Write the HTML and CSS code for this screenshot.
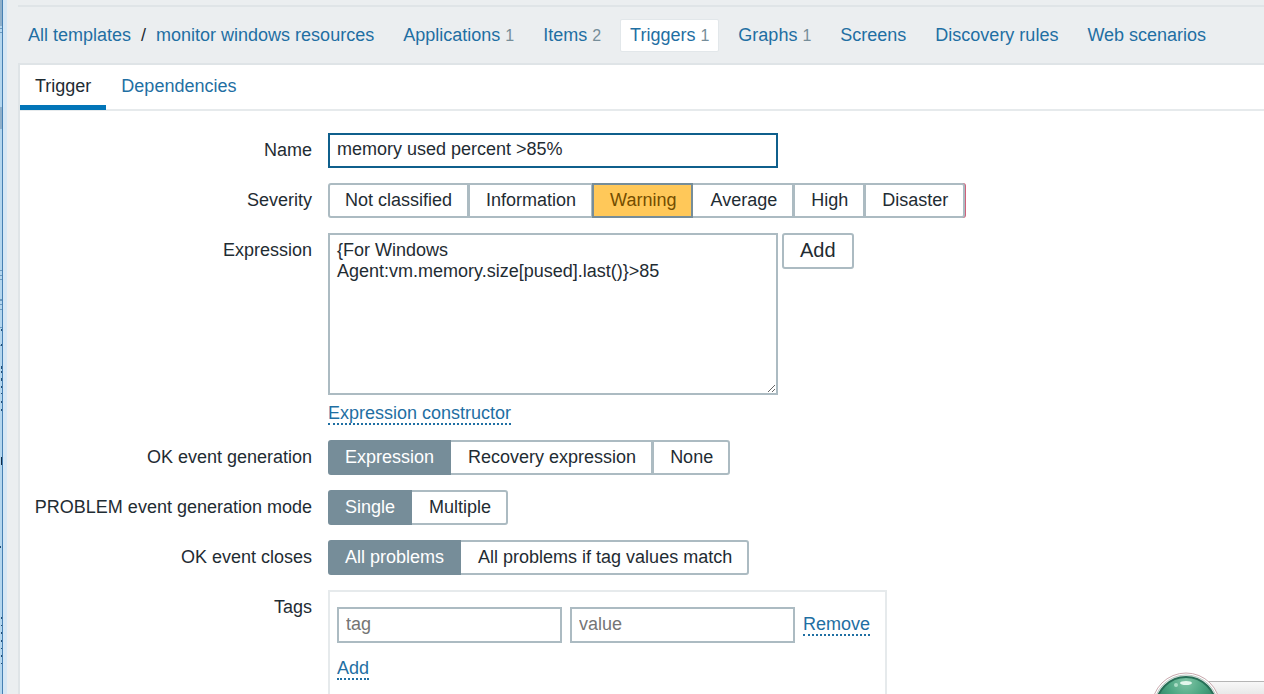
FILE: index.html
```html
<!DOCTYPE html>
<html lang="en">
<head>
<meta charset="utf-8">
<title>Trigger configuration</title>
<link rel="stylesheet" href="styles.css">
</head>
<body>
<div class="window">
  <div class="edge" aria-hidden="true">
    <svg class="edge-marks" width="3" height="694" viewBox="0 0 3 694">
      <path fill="#8fb0cb" d="M0 0h2v26H0zM0 107h2v22H0z"/>
      <path fill="#6d9abf" d="M0 28h2v1H0zM0 32h2v1H0zM0 270h2v1H0zM0 275h2v1H0zM0 279h2v1H0zM0 299h2v2H0zM0 304h2v1H0zM0 309h2v1H0zM0 327h2v1H0zM0 345h2v1H0z"/>
      <path fill="#234f77" d="M1 329h1v2H1zM1 344h1v2H1zM1 366h1v3H1zM1 371h1v2H1zM1 378h1v3H1zM1 386h1v2H1zM1 393h1v1H1zM1 401h1v2H1zM1 409h1v2H1zM0 546h1v2H0zM1 617h1v2H1zM1 625h1v1H1zM1 632h1v2H1zM1 640h1v2H1zM1 648h1v1H1zM1 655h1v2H1zM1 663h1v1H1z"/>
      <path fill="#102c48" d="M1 457h1v8H1z"/>
    </svg>
  </div>
  <div class="page">
    <nav class="nav">
      <a href="#">All templates</a><span class="slash">/</span><a href="#">monitor windows resources</a>
      <ul class="nav-list">
        <li><a href="#">Applications</a> <sup>1</sup></li>
        <li><a href="#">Items</a> <sup>2</sup></li>
        <li class="selected"><a href="#">Triggers</a> <sup>1</sup></li>
        <li><a href="#">Graphs</a> <sup>1</sup></li>
        <li><a href="#">Screens</a></li>
        <li><a href="#">Discovery rules</a></li>
        <li><a href="#">Web scenarios</a></li>
      </ul>
    </nav>
    <main class="panel">
      <div class="tabs">
        <a class="tab active" href="#">Trigger</a>
        <a class="tab" href="#">Dependencies</a>
      </div>
      <form class="form">
        <label class="label" for="name">Name</label>
        <input class="text wide focused" id="name" type="text" value="memory used percent &gt;85%">

        <span class="label" id="severity-label">Severity</span>
        <div class="segments" role="radiogroup" aria-labelledby="severity-label">
          <label><input type="radio" name="severity">Not classified</label>
          <label><input type="radio" name="severity">Information</label>
          <label class="warning"><input type="radio" name="severity" checked>Warning</label>
          <label><input type="radio" name="severity">Average</label>
          <label><input type="radio" name="severity">High</label>
          <label class="marked"><input type="radio" name="severity">Disaster</label>
        </div>

        <label class="label" for="expression">Expression</label>
        <div class="expression">
          <div class="expression-row">
            <textarea class="text wide" id="expression">{For Windows Agent:vm.memory.size[pused].last()}&gt;85</textarea>
            <button class="button" type="button">Add</button>
          </div>
          <button class="link" type="button">Expression constructor</button>
        </div>

        <span class="label" id="ok-label">OK event generation</span>
        <div class="segments" role="radiogroup" aria-labelledby="ok-label">
          <label><input type="radio" name="ok" checked>Expression</label>
          <label><input type="radio" name="ok">Recovery expression</label>
          <label><input type="radio" name="ok">None</label>
        </div>

        <span class="label" id="mode-label">PROBLEM event generation mode</span>
        <div class="segments" role="radiogroup" aria-labelledby="mode-label">
          <label><input type="radio" name="mode" checked>Single</label>
          <label><input type="radio" name="mode">Multiple</label>
        </div>

        <span class="label" id="close-label">OK event closes</span>
        <div class="segments" role="radiogroup" aria-labelledby="close-label">
          <label><input type="radio" name="close" checked>All problems</label>
          <label><input type="radio" name="close">All problems if tag values match</label>
        </div>

        <span class="label">Tags</span>
        <div class="tags">
          <div class="tag-row">
            <input class="text tag" type="text" placeholder="tag" aria-label="tag">
            <input class="text tag" type="text" placeholder="value" aria-label="value">
            <button class="link" type="button">Remove</button>
          </div>
          <button class="link" type="button">Add</button>
        </div>
      </form>
    </main>
  </div>
</div>
<svg class="orb" width="114" height="24" viewBox="0 0 114 24" aria-hidden="true">
  <defs>
    <radialGradient id="shine" cx="50%" cy="8%" r="60%">
      <stop offset="0" stop-color="#7fc4a5"/>
      <stop offset="0.5" stop-color="#4ba581"/>
      <stop offset="1" stop-color="#2c7c60"/>
    </radialGradient>
    <linearGradient id="bar" x1="0" y1="0" x2="0" y2="1">
      <stop offset="0" stop-color="#f8f8f8"/>
      <stop offset="1" stop-color="#e9e9e9"/>
    </linearGradient>
  </defs>
  <path d="M50 11.500H114V24H50z" fill="url(#bar)"/>
  <path d="M58 11.500H114" stroke="#b5b5b5"/>
  <circle cx="36" cy="37" r="34" fill="#fff" stroke="#c9a9ae"/>
  <circle cx="36" cy="37" r="32" fill="#edf4f1" stroke="#b9c7c2"/>
  <circle cx="36" cy="37" r="30" fill="url(#shine)" stroke="#286f57" stroke-width="2"/>
  <ellipse cx="36" cy="13" rx="6" ry="2" fill="#e3f6ec"/>
  <ellipse cx="26" cy="15" rx="2" ry="2" fill="#a9dcc4"/>
</svg>
</body>
</html>
```
FILE: styles.css
```css
* { box-sizing: border-box; }

body {
  margin: 0;
  height: 100vh;
  overflow: hidden;
  background: #ebeef0;
  color: #1f2c33;
  font: 18px/21px "Liberation Sans", Arial, sans-serif;
}

input, textarea, button { font: inherit; color: inherit; }

a, .link { color: #1f6fa3; text-decoration: none; }

.window { display: flex; min-height: 100vh; }

.edge {
  flex: none;
  width: 7px;
  background: linear-gradient(90deg, #b4d6ee 2px, #4680b3 2px, #4680b3 3px, #d6e7f5 3px);
}
.edge-marks { display: block; }

.page { flex: 1; min-width: 0; display: flex; flex-direction: column; padding: 5px 0 0 11px; }

.nav {
  display: flex;
  align-items: center;
  border-top: 2px solid #dfe4e7;
  padding: 12px 10px 11px;
  white-space: nowrap;
}
.slash { margin: 0 10px; }

.nav-list { display: flex; gap: 9px; list-style: none; margin: 0 0 0 19px; padding: 0; }
.nav-list li { padding: 5px 9px; border: 1px solid transparent; border-radius: 2px; }
.nav-list .selected { background: #fff; border-color: #e2e7ea; }
.nav-list sup { font-size: 16px; line-height: 1; vertical-align: baseline; color: #768d99; }

.panel { flex: 1; background: #fff; border: solid #dfe4e7; border-width: 2px 0 0 2px; }

.tabs { display: flex; border-bottom: 2px solid #e6eaec; }
.tab { padding: 11px 15px 8px; border-bottom: 5px solid transparent; }
.tab.active { color: #1f2c33; border-color: #0275b8; }
.tabs .tab { margin-bottom: -1px; }

.form {
  display: grid;
  grid-template-columns: 292px 1fr;
  column-gap: 16px;
  row-gap: 15px;
  align-items: start;
  justify-items: start;
  padding: 22px 0;
}
.label { justify-self: end; padding-top: 7px; white-space: nowrap; }

.text {
  background: #fff;
  border: 2px solid #acbbc2;
  border-radius: 0;
  padding: 0 7px 2px;
  height: 36px;
  outline: none;
}
.text.wide { width: 450px; }
.text.tag { width: 225px; }
.text.focused { height: 35px; border-color: #0f5f8c; }
.text::placeholder { color: #757575; opacity: 1; }
textarea.text { display: block; height: 162px; padding: 5px 7px; resize: both; }

.segments { display: flex; }
.segments label {
  position: relative;
  height: 35px;
  border: 2px solid #acbbc2;
  background: #fff;
  padding: 5px 15px;
  white-space: nowrap;
}
.segments label + label { margin-left: -1px; padding-left: 16px; }
.segments label:first-child { border-radius: 3px 0 0 3px; }
.segments label:last-child { border-radius: 0 3px 3px 0; }
.segments label:has(:checked) { background: #768d99; border-color: #768d99; color: #fff; z-index: 1; }
.segments label.warning:has(:checked) { background: #ffc859; color: #734d00; }
.segments label:has(:checked) + label { border-left-width: 1px; padding-left: 17px; }
.segments label.marked { box-shadow: 1px 0 #d0607a; }
.segments input { position: absolute; opacity: 0; margin: 0; }

.expression-row { display: flex; align-items: flex-start; gap: 4px; margin-bottom: 9px; }

.button {
  height: 36px;
  padding: 0 16px 2px;
  border: 2px solid #acbbc2;
  border-radius: 3px;
  background: #fff;
  font-size: 20px;
}

.link {
  display: block;
  background: none;
  border: 0;
  border-bottom: 2px dotted #1f6fa3;
  padding: 0;
  line-height: 19px;
}

.tags { border: 2px solid #e6eaec; padding: 15px 15px 14px 7px; }
.tag-row { display: flex; align-items: center; gap: 8px; margin-bottom: 16px; }

.orb { position: absolute; right: 0; bottom: 0; }
```
